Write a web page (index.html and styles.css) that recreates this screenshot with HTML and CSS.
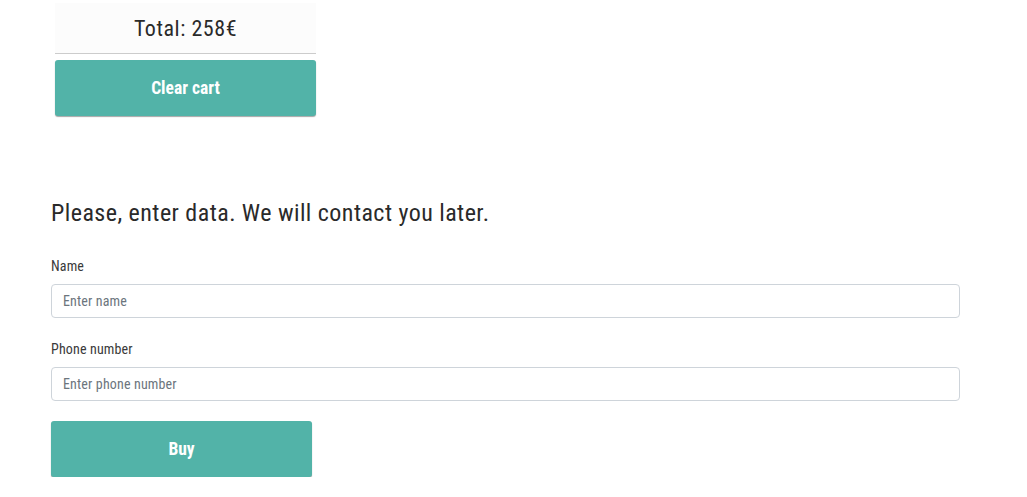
FILE: index.html
```html
<!DOCTYPE html>
<html>
<head>
<meta charset="utf-8">
<link rel="stylesheet" href="styles.css">
</head>
<body>
<div class="page">
  <section class="cart">
    <div class="total">Total: 258€</div>
    <button class="btn btn-clear">Clear cart</button>
  </section>
  <section class="order">
    <h2 class="title">Please, enter data. We will contact you later.</h2>
    <div class="field">
      <label class="label">Name</label>
      <input class="input" type="text" placeholder="Enter name">
    </div>
    <div class="field">
      <label class="label">Phone number</label>
      <input class="input" type="text" placeholder="Enter phone number">
    </div>
    <button class="btn btn-buy">Buy</button>
  </section>
</div>
</body>
</html>
```
FILE: styles.css
```css
* { box-sizing: border-box; }
body {
  margin: 0;
  background: #fff;
  font-family: "Roboto Condensed", "Roboto", "DejaVu Sans Condensed", sans-serif;
  font-stretch: condensed;
  color: #212529;
}
.page {
  padding: 3px 0 0 51px;
  width: 960px;
}
.cart {
  margin-left: 4px;
  width: 261px;
}
.total {
  height: 51px;
  background: #fcfcfc;
  border-bottom: 1px solid #cccccc;
  display: flex;
  align-items: center;
  justify-content: center;
  font-size: 22px;
  font-weight: 400;
  letter-spacing: 0.55px;
  color: #2a2a2a;
}
.btn {
  display: flex;
  align-items: center;
  justify-content: center;
  width: 261px;
  height: 56px;
  border: none;
  border-radius: 3px;
  background: #52b3a8;
  color: #fff;
  font-family: inherit;
  font-stretch: condensed;
  font-weight: 700;
  font-size: 17.5px;
  box-shadow: 0 1px 1px rgba(0,0,0,0.35);
  padding: 0 0 1px;
}
.btn-clear { margin-top: 6px; }
.order { padding-top: 83px; }
.title {
  margin: 0 0 29px;
  font-size: 24px;
  font-weight: 400;
  letter-spacing: 0.45px;
  line-height: 29px;
  color: #2a2a2a;
}
.field {
  display: flex;
  flex-direction: column;
}
.field + .field { margin-top: 22px; }
.label {
  font-size: 14px;
  font-weight: 400;
  letter-spacing: 0.15px;
  line-height: 18px;
  color: #3a3a3a;
  margin-bottom: 9px;
}
.input {
  width: 909px;
  height: 34px;
  border: 1px solid #ced4da;
  border-radius: 4px;
  padding: 0 11px;
  font-family: inherit;
  font-stretch: condensed;
  font-size: 14px;
  font-weight: 400;
  letter-spacing: 0.15px;
  color: #495057;
}
.input::placeholder { color: #6c757d; }
.btn-buy { margin-top: 20px; width: 261px; }
```
